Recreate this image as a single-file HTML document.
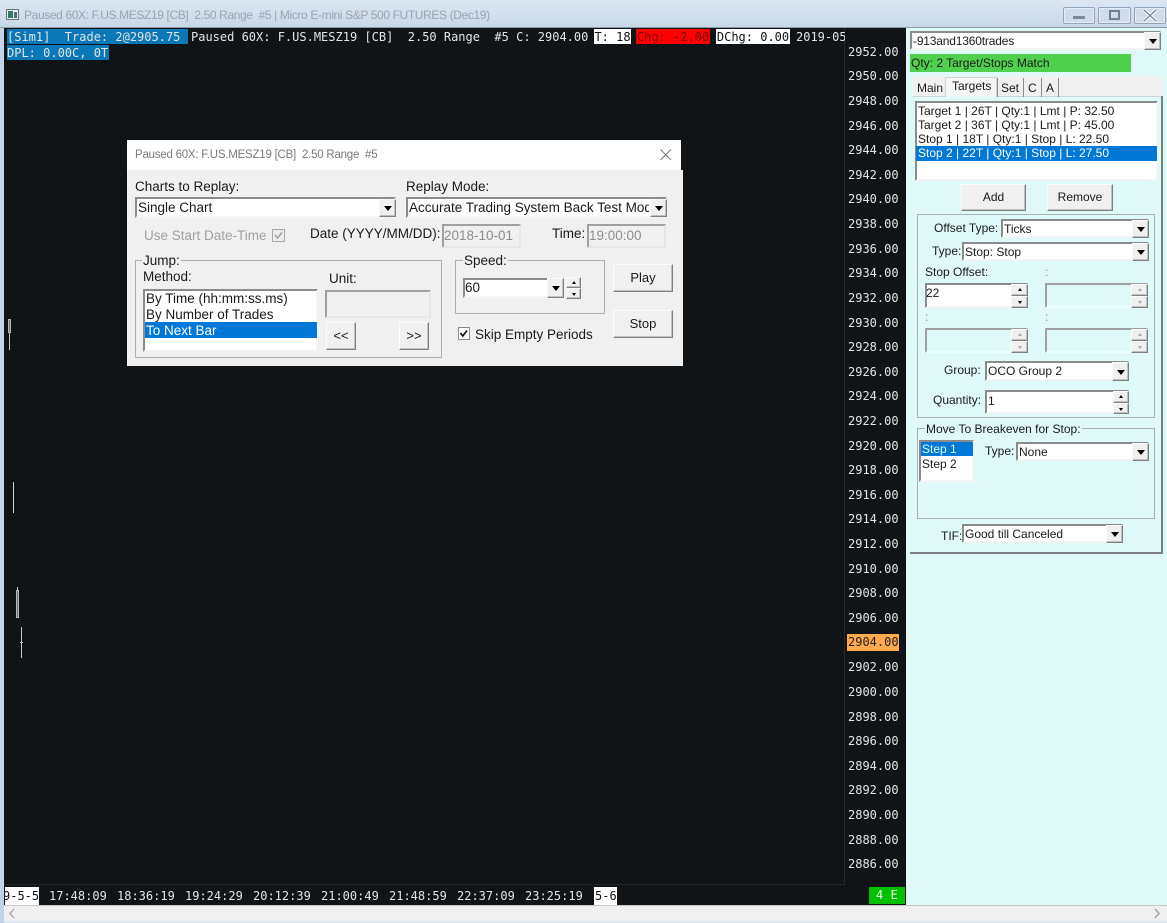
<!DOCTYPE html>
<html><head><meta charset="utf-8">
<style>
html,body{margin:0;padding:0;width:1167px;height:923px;overflow:hidden;background:#dff9f9}
div,span{box-sizing:border-box}
.a{position:absolute}
.t{position:absolute;white-space:pre;font:13.5px/16px "Liberation Sans",sans-serif;color:#1a1a1a}
.s{font-size:12px}
.g{color:#8c8c8c}
.m{position:absolute;white-space:pre;font:12px/15px "DejaVu Sans Mono",monospace;color:#e4e4e4}
.sk{position:absolute;background:#fff;border:2px solid;border-color:#8b8b8b #f4f4f4 #f4f4f4 #8b8b8b}
.dis{background:#f0f0f0;border-color:#a0a0a0 #e6e6e6 #e6e6e6 #a0a0a0}
.dc{background:#dff9f9;border-color:#a0a0a0 #eafcfc #eafcfc #a0a0a0}
.b{position:absolute;background:#f0f0f0;border:1px solid;border-color:#fbfbfb #808080 #808080 #fbfbfb;box-shadow:inset -1px -1px 0 #c0c0c0;text-align:center;font:13px/25px "Liberation Sans",sans-serif;color:#1a1a1a}
.d::after{content:"";position:absolute;left:50%;top:50%;margin:-2px 0 0 -4px;border:4px solid transparent;border-top:5px solid #000;border-bottom:0}
.u::after{content:"";position:absolute;left:50%;top:50%;margin:-2px 0 0 -2px;border:2px solid transparent;border-bottom:3px solid #000;border-top:0}
.v::after{content:"";position:absolute;left:50%;top:50%;margin:-1px 0 0 -2px;border:2px solid transparent;border-top:3px solid #000;border-bottom:0}
.x.u::after{border-bottom-color:#aaa}.x.v::after{border-top-color:#aaa}
.gb{position:absolute;border:1px solid #a8b0b0}
.sel{position:absolute;background:#0078d7}
.w{position:absolute;background:#cfdceb;border:1px solid #8fa3ba;border-radius:2px;box-shadow:inset 0 0 0 1px #e4ecf5}
</style></head><body>

<!-- title bar -->
<div class="a" style="left:0;top:0;width:1167px;height:28px;background:linear-gradient(#dce7f2,#c7d7e7)"></div>
<div class="a" style="left:0;top:27px;width:1167px;height:1px;background:#8d9aa6"></div>
<div class="a" style="left:6px;top:9px;width:13px;height:11px;background:#e8eef0;border:1px solid #66757a"></div>
<div class="a" style="left:8px;top:11px;width:5px;height:7px;background:#2f7f62"></div>
<div class="a" style="left:14px;top:12px;width:3px;height:6px;background:#5b6c78"></div>
<div class="t" style="left:24px;top:7px;font-size:12px;letter-spacing:-0.37px;color:#98a4ae">Paused 60X: F.US.MESZ19 [CB]  2.50 Range  #5 | Micro E-mini S&amp;P 500 FUTURES (Dec19)</div>
<div class="w" style="left:1063px;top:7px;width:32px;height:17px"></div>
<div class="a" style="left:1073px;top:16px;width:12px;height:3px;background:#788a9c"></div>
<div class="w" style="left:1098px;top:7px;width:33px;height:17px"></div>
<div class="a" style="left:1109px;top:10px;width:11px;height:10px;border:2px solid #6f8194"></div>
<div class="w" style="left:1134px;top:7px;width:32px;height:17px"></div>
<svg class="a" style="left:1142px;top:8px" width="16" height="15"><path d="M2 2 L14 13 M14 2 L2 13" stroke="#fff" stroke-width="3.4"/><path d="M2 2 L14 13 M14 2 L2 13" stroke="#6f8194" stroke-width="1.2"/></svg>

<!-- window left edge & chart -->
<div class="a" style="left:0;top:28px;width:4px;height:877px;background:#c3d4e6"></div>
<div class="a" style="left:4px;top:28px;width:902px;height:877px;background:#101416"></div>
<div class="a" style="left:844px;top:28px;width:1px;height:857px;background:#25292b"></div>
<div class="a" style="left:4px;top:884px;width:841px;height:1px;background:#25292b"></div>

<!-- header text -->
<div class="a" style="left:7px;top:29px;width:181px;height:15px;background:#0a78b8"></div>
<div class="m" style="left:7px;top:30px">[Sim1]  Trade: 2@2905.75</div>
<div class="m" style="left:191px;top:30px">Paused 60X: F.US.MESZ19 [CB]  2.50 Range  #5 C: 2904.00</div>
<div class="m" style="left:594px;top:29px;width:37px;height:15px;background:#fff;color:#111;text-align:center;line-height:17px">T: 18</div>
<div class="m" style="left:636px;top:29px;width:74px;height:15px;background:#f00;color:#7a0000;text-align:center;line-height:17px">Chg: -2.00</div>
<div class="m" style="left:716px;top:29px;width:74px;height:15px;background:#fff;color:#111;text-align:center;line-height:17px">DChg: 0.00</div>
<div class="m" style="left:796px;top:30px;width:49px;overflow:hidden">2019-05</div>
<div class="a" style="left:7px;top:45px;width:102px;height:15px;background:#0a78b8"></div>
<div class="m" style="left:7px;top:46px">DPL: 0.00C, 0T</div>

<!-- prices -->
<div class="m" style="left:848px;top:45px">2952.00</div>
<div class="m" style="left:848px;top:69px">2950.00</div>
<div class="m" style="left:848px;top:94px">2948.00</div>
<div class="m" style="left:848px;top:119px">2946.00</div>
<div class="m" style="left:848px;top:143px">2944.00</div>
<div class="m" style="left:848px;top:168px">2942.00</div>
<div class="m" style="left:848px;top:192px">2940.00</div>
<div class="m" style="left:848px;top:217px">2938.00</div>
<div class="m" style="left:848px;top:242px">2936.00</div>
<div class="m" style="left:848px;top:266px">2934.00</div>
<div class="m" style="left:848px;top:291px">2932.00</div>
<div class="m" style="left:848px;top:316px">2930.00</div>
<div class="m" style="left:848px;top:340px">2928.00</div>
<div class="m" style="left:848px;top:365px">2926.00</div>
<div class="m" style="left:848px;top:389px">2924.00</div>
<div class="m" style="left:848px;top:414px">2922.00</div>
<div class="m" style="left:848px;top:439px">2920.00</div>
<div class="m" style="left:848px;top:463px">2918.00</div>
<div class="m" style="left:848px;top:488px">2916.00</div>
<div class="m" style="left:848px;top:512px">2914.00</div>
<div class="m" style="left:848px;top:537px">2912.00</div>
<div class="m" style="left:848px;top:562px">2910.00</div>
<div class="m" style="left:848px;top:586px">2908.00</div>
<div class="m" style="left:848px;top:611px">2906.00</div>
<div class="a" style="left:847px;top:634px;width:52px;height:17px;background:#ffa94d"></div>
<div class="m" style="left:848px;top:635px;color:#222">2904.00</div>
<div class="m" style="left:848px;top:660px">2902.00</div>
<div class="m" style="left:848px;top:685px">2900.00</div>
<div class="m" style="left:848px;top:710px">2898.00</div>
<div class="m" style="left:848px;top:734px">2896.00</div>
<div class="m" style="left:848px;top:759px">2894.00</div>
<div class="m" style="left:848px;top:783px">2892.00</div>
<div class="m" style="left:848px;top:808px">2890.00</div>
<div class="m" style="left:848px;top:833px">2888.00</div>
<div class="m" style="left:848px;top:857px">2886.00</div>

<!-- candles -->
<div class="a" style="left:9px;top:319px;width:1px;height:31px;background:#bfc4c4"></div>
<div class="a" style="left:8px;top:319px;width:3px;height:14px;border:1px solid #b4b8b8;background:#707474"></div>
<div class="a" style="left:13px;top:482px;width:1px;height:31px;background:#d0d4d4"></div>
<div class="a" style="left:17px;top:587px;width:1px;height:31px;background:#c4c8c8"></div>
<div class="a" style="left:16px;top:590px;width:3px;height:28px;border:1px solid #b4b8b8;background:#707474"></div>
<div class="a" style="left:21px;top:627px;width:1px;height:31px;background:#c4c8c8"></div>
<div class="a" style="left:20px;top:642px;width:3px;height:1px;background:#c4c8c8"></div>

<!-- time axis -->
<div class="a" style="left:5px;top:887px;width:34px;height:18px;background:#fff;overflow:hidden"><div class="m" style="left:-2px;top:2px;color:#111">9-5-5</div></div>
<div class="m" style="left:49px;top:889px">17:48:09</div>
<div class="m" style="left:117px;top:889px">18:36:19</div>
<div class="m" style="left:185px;top:889px">19:24:29</div>
<div class="m" style="left:253px;top:889px">20:12:39</div>
<div class="m" style="left:321px;top:889px">21:00:49</div>
<div class="m" style="left:389px;top:889px">21:48:59</div>
<div class="m" style="left:457px;top:889px">22:37:09</div>
<div class="m" style="left:525px;top:889px">23:25:19</div>
<div class="a" style="left:594px;top:887px;width:23px;height:18px;background:#fff"><div class="m" style="left:1px;top:2px;color:#111">5-6</div></div>
<div class="a" style="left:869px;top:887px;width:36px;height:17px;background:#00c000"></div>
<div class="m" style="left:876px;top:888px;color:#e8ffe8">4 E</div>

<!-- scrollbar -->
<div class="a" style="left:0;top:905px;width:1167px;height:16px;background:#f0f0f0;border-top:1px solid #c8c8c8"></div>
<div class="a" style="left:0;top:921px;width:1167px;height:2px;background:#dde6ee"></div>
<div class="a" style="left:0;top:905px;width:4px;height:18px;background:#c3d4e6"></div>
<svg class="a" style="left:8px;top:908px" width="8" height="11"><path d="M6 1 L2 5.5 L6 10" fill="none" stroke="#b0b0b0" stroke-width="1.6"/></svg>
<svg class="a" style="left:1153px;top:908px" width="8" height="11"><path d="M2 1 L6 5.5 L2 10" fill="none" stroke="#a8a8a8" stroke-width="1.6"/></svg>

<!-- dialog -->
<div class="a" style="left:127px;top:140px;width:554px;height:30px;background:#fff"></div>
<div class="a" style="left:127px;top:170px;width:556px;height:196px;background:#f0f0f0"></div>
<div class="t" style="left:135px;top:147px;font-size:11.5px;letter-spacing:-0.23px;color:#7a7a7a">Paused 60X: F.US.MESZ19 [CB]  2.50 Range  #5</div>
<svg class="a" style="left:660px;top:149px" width="12" height="12"><path d="M0.5 0.5 L11 11 M11 0.5 L0.5 11" stroke="#777" stroke-width="1"/></svg>

<div class="t" style="left:135px;top:179px">Charts to Replay:</div>
<div class="sk" style="left:135px;top:197px;width:261px;height:21px"></div>
<div class="t" style="left:138px;top:200px">Single Chart</div>
<div class="b d" style="left:379px;top:199px;width:17px;height:18px"></div>

<div class="t" style="left:406px;top:179px">Replay Mode:</div>
<div class="sk" style="left:406px;top:197px;width:261px;height:21px"></div>
<div class="t" style="left:409px;top:200px;width:240px;overflow:hidden">Accurate Trading System Back Test Mode</div>
<div class="b d" style="left:650px;top:199px;width:17px;height:18px"></div>

<div class="t" style="left:144px;top:228px;color:#a0a0a0">Use Start Date-Time</div>
<div class="a" style="left:272px;top:229px;width:13px;height:13px;border:1px solid #a8a8a8;background:#ececec"></div>
<svg class="a" style="left:274px;top:231px" width="9" height="9"><path d="M1 4 L3.5 7 L8 1.5" fill="none" stroke="#a0a0a0" stroke-width="1.5"/></svg>
<div class="t" style="left:310px;top:226px">Date (YYYY/MM/DD):</div>
<div class="sk dis" style="left:442px;top:224px;width:79px;height:24px"></div>
<div class="t g" style="left:444px;top:228px">2018-10-01</div>
<div class="t" style="left:552px;top:226px">Time:</div>
<div class="sk dis" style="left:587px;top:224px;width:79px;height:24px"></div>
<div class="t g" style="left:589px;top:228px">19:00:00</div>

<div class="gb" style="left:135px;top:260px;width:307px;height:98px"></div>
<div class="t" style="left:142px;top:253px;background:#f0f0f0;padding:0 1px">Jump:</div>
<div class="t" style="left:143px;top:269px">Method:</div>
<div class="t" style="left:329px;top:271px">Unit:</div>
<div class="sk" style="left:143px;top:289px;width:175px;height:63px"></div>
<div class="sel" style="left:145px;top:322px;width:172px;height:16px"></div>
<div class="t" style="left:146px;top:291px">By Time (hh:mm:ss.ms)</div>
<div class="t" style="left:146px;top:307px">By Number of Trades</div>
<div class="t" style="left:146px;top:323px;color:#fff">To Next Bar</div>
<div class="sk dis" style="left:325px;top:290px;width:106px;height:28px"></div>
<div class="b" style="left:326px;top:322px;width:30px;height:28px">&lt;&lt;</div>
<div class="b" style="left:399px;top:322px;width:30px;height:28px">&gt;&gt;</div>

<div class="gb" style="left:455px;top:260px;width:150px;height:54px"></div>
<div class="t" style="left:463px;top:253px;background:#f0f0f0;padding:0 1px">Speed:</div>
<div class="sk" style="left:463px;top:278px;width:101px;height:20px"></div>
<div class="t" style="left:465px;top:280px">60</div>
<div class="b d" style="left:547px;top:278px;width:17px;height:20px"></div>
<div class="b u" style="left:566px;top:277px;width:15px;height:11px"></div>
<div class="b v" style="left:566px;top:288px;width:15px;height:11px"></div>
<div class="a" style="left:458px;top:327px;width:12px;height:13px;background:#fff;border:1px solid #8b8b8b"></div>
<svg class="a" style="left:459px;top:329px" width="10" height="9"><path d="M1.5 4 L3.8 7 L8 1.5" fill="none" stroke="#111" stroke-width="1.7"/></svg>
<div class="t" style="left:475px;top:327px">Skip Empty Periods</div>
<div class="b" style="left:613px;top:264px;width:60px;height:28px">Play</div>
<div class="b" style="left:613px;top:310px;width:60px;height:28px">Stop</div>

<!-- right panel -->
<div class="sk" style="left:910px;top:31px;width:251px;height:19px"></div>
<div class="t s" style="left:913px;top:33px;letter-spacing:-0.18px">-913and1360trades</div>
<div class="b d" style="left:1144px;top:32px;width:17px;height:18px"></div>
<div class="a" style="left:910px;top:54px;width:221px;height:18px;background:#4fd04f"></div>
<div class="t s" style="left:911px;top:55px">Qty: 2 Target/Stops Match</div>

<div class="a" style="left:913px;top:76px;width:250px;height:21px;background:#f0f0f0"></div>
<div class="a" style="left:910px;top:96px;width:253px;height:458px;border-right:2px solid #7c8080;border-bottom:2px solid #7c8080"></div>
<div class="a" style="left:913px;top:96px;width:248px;height:1px;background:#d0d4d4"></div>
<div class="t s" style="left:917px;top:80px">Main</div>
<div class="a" style="left:945px;top:77px;width:52px;height:20px;background:#f4f5f5;border:1px solid #d0d4d4;border-bottom:0"></div>
<div class="t s" style="left:952px;top:78px">Targets</div>
<div class="a" style="left:997px;top:78px;width:1px;height:19px;background:#8a8a8a"></div>
<div class="t s" style="left:1001px;top:80px">Set</div>
<div class="a" style="left:1023px;top:78px;width:1px;height:19px;background:#8a8a8a"></div>
<div class="t s" style="left:1028px;top:80px">C</div>
<div class="a" style="left:1041px;top:78px;width:1px;height:19px;background:#8a8a8a"></div>
<div class="t s" style="left:1046px;top:80px">A</div>
<div class="a" style="left:1058px;top:78px;width:1px;height:19px;background:#8a8a8a"></div>

<div class="sk" style="left:915px;top:101px;width:243px;height:80px"></div>
<div class="sel" style="left:916px;top:146px;width:241px;height:15px"></div>
<div class="t s" style="left:918px;top:103px">Target 1 | 26T | Qty:1 | Lmt | P: 32.50</div>
<div class="t s" style="left:918px;top:117px">Target 2 | 36T | Qty:1 | Lmt | P: 45.00</div>
<div class="t s" style="left:918px;top:131px">Stop 1 | 18T | Qty:1 | Stop | L: 22.50</div>
<div class="t s" style="left:918px;top:145px;color:#fff">Stop 2 | 22T | Qty:1 | Stop | L: 27.50</div>
<div class="b" style="left:961px;top:184px;width:65px;height:27px;font-size:12px">Add</div>
<div class="b" style="left:1047px;top:184px;width:66px;height:27px;font-size:12px">Remove</div>

<div class="gb" style="left:917px;top:214px;width:238px;height:204px"></div>
<div class="t s" style="left:934px;top:220px">Offset Type:</div>
<div class="sk" style="left:1001px;top:219px;width:148px;height:19px"></div>
<div class="t s" style="left:1004px;top:221px">Ticks</div>
<div class="b d" style="left:1132px;top:220px;width:17px;height:18px"></div>
<div class="t s" style="left:932px;top:243px">Type:</div>
<div class="sk" style="left:962px;top:242px;width:187px;height:19px"></div>
<div class="t s" style="left:965px;top:244px">Stop: Stop</div>
<div class="b d" style="left:1132px;top:243px;width:17px;height:18px"></div>
<div class="t s" style="left:925px;top:264px">Stop Offset:</div>
<div class="t s g" style="left:1045px;top:264px">:</div>
<div class="sk" style="left:925px;top:283px;width:103px;height:25px"></div>
<div class="t s" style="left:926px;top:285px">22</div>
<div class="b u" style="left:1011px;top:284px;width:17px;height:12px"></div>
<div class="b v" style="left:1011px;top:296px;width:17px;height:12px"></div>
<div class="sk dc" style="left:1045px;top:283px;width:103px;height:25px"></div>
<div class="b u x" style="left:1131px;top:284px;width:17px;height:12px"></div>
<div class="b v x" style="left:1131px;top:296px;width:17px;height:12px"></div>
<div class="t s g" style="left:925px;top:309px">:</div>
<div class="t s g" style="left:1045px;top:309px">:</div>
<div class="sk dc" style="left:925px;top:328px;width:103px;height:25px"></div>
<div class="b u x" style="left:1011px;top:329px;width:17px;height:12px"></div>
<div class="b v x" style="left:1011px;top:341px;width:17px;height:12px"></div>
<div class="sk dc" style="left:1045px;top:328px;width:103px;height:25px"></div>
<div class="b u x" style="left:1131px;top:329px;width:17px;height:12px"></div>
<div class="b v x" style="left:1131px;top:341px;width:17px;height:12px"></div>
<div class="t s" style="left:944px;top:362px">Group:</div>
<div class="sk" style="left:985px;top:361px;width:144px;height:20px"></div>
<div class="t s" style="left:988px;top:363px">OCO Group 2</div>
<div class="b d" style="left:1112px;top:362px;width:17px;height:19px"></div>
<div class="t s" style="left:933px;top:392px">Quantity:</div>
<div class="sk" style="left:985px;top:390px;width:144px;height:24px"></div>
<div class="t s" style="left:988px;top:393px">1</div>
<div class="b u" style="left:1113px;top:391px;width:16px;height:12px"></div>
<div class="b v" style="left:1113px;top:403px;width:16px;height:11px"></div>

<div class="gb" style="left:917px;top:428px;width:238px;height:91px"></div>
<div class="t s" style="left:925px;top:421px;background:#dff9f9;padding:0 1px">Move To Breakeven for Stop:</div>
<div class="sk" style="left:919px;top:440px;width:55px;height:42px"></div>
<div class="sel" style="left:921px;top:442px;width:52px;height:14px"></div>
<div class="t s" style="left:922px;top:441px;color:#dff">Step 1</div>
<div class="t s" style="left:922px;top:456px">Step 2</div>
<div class="t s" style="left:985px;top:443px">Type:</div>
<div class="sk" style="left:1016px;top:442px;width:133px;height:19px"></div>
<div class="t s" style="left:1019px;top:444px">None</div>
<div class="b d" style="left:1132px;top:443px;width:17px;height:18px"></div>
<div class="t s" style="left:941px;top:528px">TIF:</div>
<div class="sk" style="left:962px;top:524px;width:161px;height:19px"></div>
<div class="t s" style="left:965px;top:526px">Good till Canceled</div>
<div class="b d" style="left:1106px;top:525px;width:17px;height:18px"></div>

</body></html>
